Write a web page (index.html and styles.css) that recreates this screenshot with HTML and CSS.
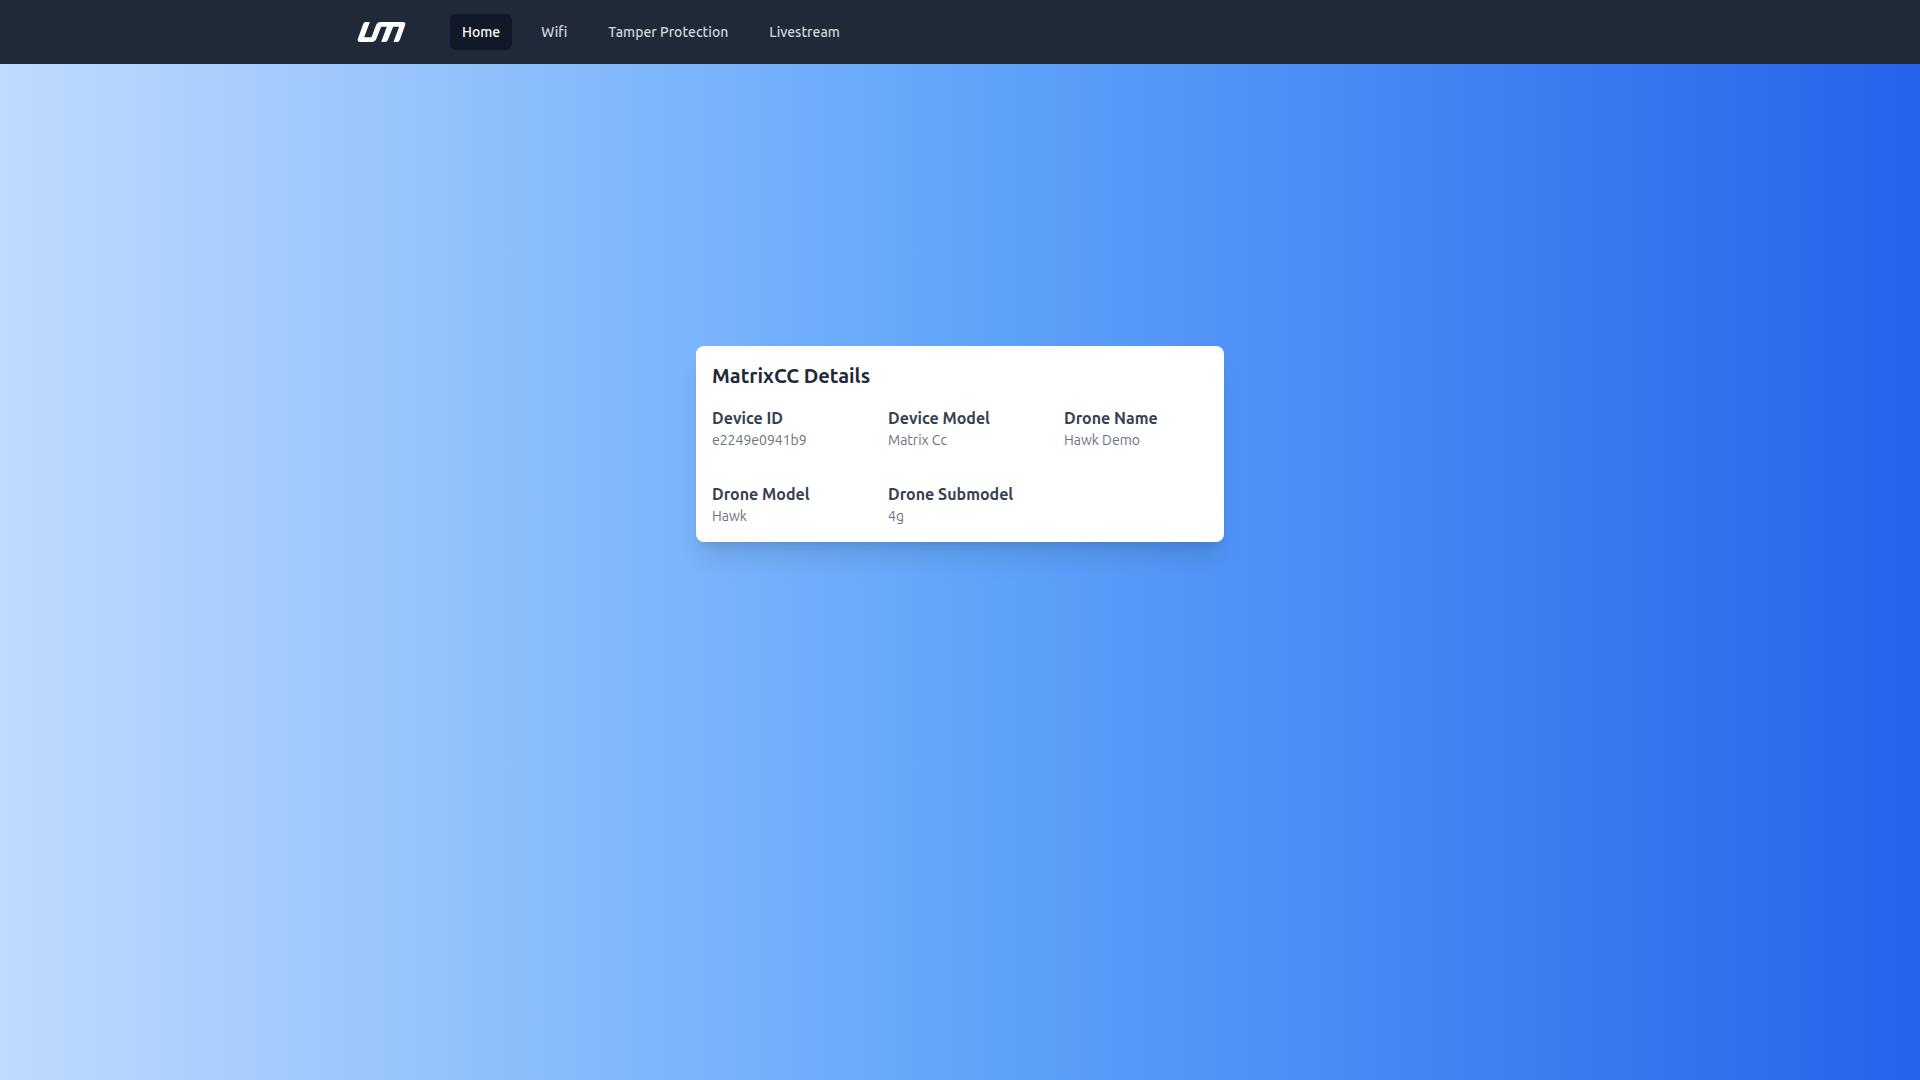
FILE: index.html
```html
<!DOCTYPE html>
<html lang="en">
<head>
  <meta charset="utf-8">
  <meta name="viewport" content="width=device-width, initial-scale=1">
  <title>MatrixCC</title>
  <link rel="stylesheet" href="styles.css">
</head>
<body>
  <header class="topbar">
    <div class="topbar-inner">
      <a class="brand" href="#" aria-label="Home page">
        <svg class="logo" viewBox="0 0 144 60" aria-hidden="true">
          <path d="M22 0H37L20 46H42L56 8Q59 0 68 0H136Q146 0 143 9L127 54Q125 60 118 60H108L125 14H107L91 54Q89 60 82 60H71L88 14H71L56 52Q53 60 45 60H8Q-2 60 1 51L17 6Q19 0 24 0Z"/>
        </svg>
      </a>
      <nav class="menu">
        <a class="menu-link active" href="#" aria-current="page">Home</a>
        <a class="menu-link" href="#wifi">Wifi</a>
        <a class="menu-link" href="#tamper">Tamper Protection</a>
        <a class="menu-link" href="#livestream">Livestream</a>
      </nav>
    </div>
  </header>
  <main class="page">
    <section class="card">
      <h1 class="card-title">MatrixCC Details</h1>
      <dl class="details">
        <div class="detail"><dt>Device ID</dt><dd>e2249e0941b9</dd></div>
        <div class="detail"><dt>Device Model</dt><dd>Matrix Cc</dd></div>
        <div class="detail"><dt>Drone Name</dt><dd>Hawk Demo</dd></div>
        <div class="detail"><dt>Drone Model</dt><dd>Hawk</dd></div>
        <div class="detail"><dt>Drone Submodel</dt><dd>4g</dd></div>
      </dl>
    </section>
  </main>
</body>
</html>
```
FILE: styles.css
```css
* {
  box-sizing: border-box;
  margin: 0;
}

body {
  display: flex;
  flex-direction: column;
  min-height: 100vh;
  font-family: Ubuntu, "Noto Sans", sans-serif;
  font-size: 16px;
  line-height: 24px;
}

.topbar {
  background: #1f2937;
}

.topbar-inner {
  display: flex;
  align-items: center;
  gap: 44px;
  max-width: 1280px;
  height: 64px;
  margin: 0 auto;
  padding: 0 37px;
}

.brand {
  display: flex;
}

.logo {
  width: 49px;
  height: 20px;
  fill: #fff;
}

.menu {
  display: flex;
  gap: 17px;
}

.menu-link {
  padding: 8px 12px;
  border-radius: 6px;
  color: #d1d5db;
  font-size: 14px;
  font-weight: 500;
  line-height: 20px;
  text-decoration: none;
}

.menu-link.active {
  background: #111827;
  color: #fff;
}

.page {
  flex: 1;
  padding: 282px 16px 32px;
  background: linear-gradient(to right, #bfdbfe, #60a5fa, #2563eb);
}

.card {
  max-width: 528px;
  margin: 0 auto;
  padding: 16px;
  border-radius: 8px;
  background: #fff;
  box-shadow: 0 20px 25px -5px rgba(0, 0, 0, 0.1), 0 8px 10px -6px rgba(0, 0, 0, 0.1);
}

.card-title {
  margin-bottom: 16px;
  color: #1f2937;
  font-size: 20px;
  font-weight: 700;
  line-height: 28px;
}

.details {
  display: grid;
  grid-template-columns: repeat(3, minmax(0, 1fr));
  gap: 32px;
}

.detail dt {
  color: #374151;
  font-weight: 700;
  white-space: nowrap;
}

.detail dd {
  color: #6b7280;
  font-size: 14px;
  line-height: 20px;
}
```
